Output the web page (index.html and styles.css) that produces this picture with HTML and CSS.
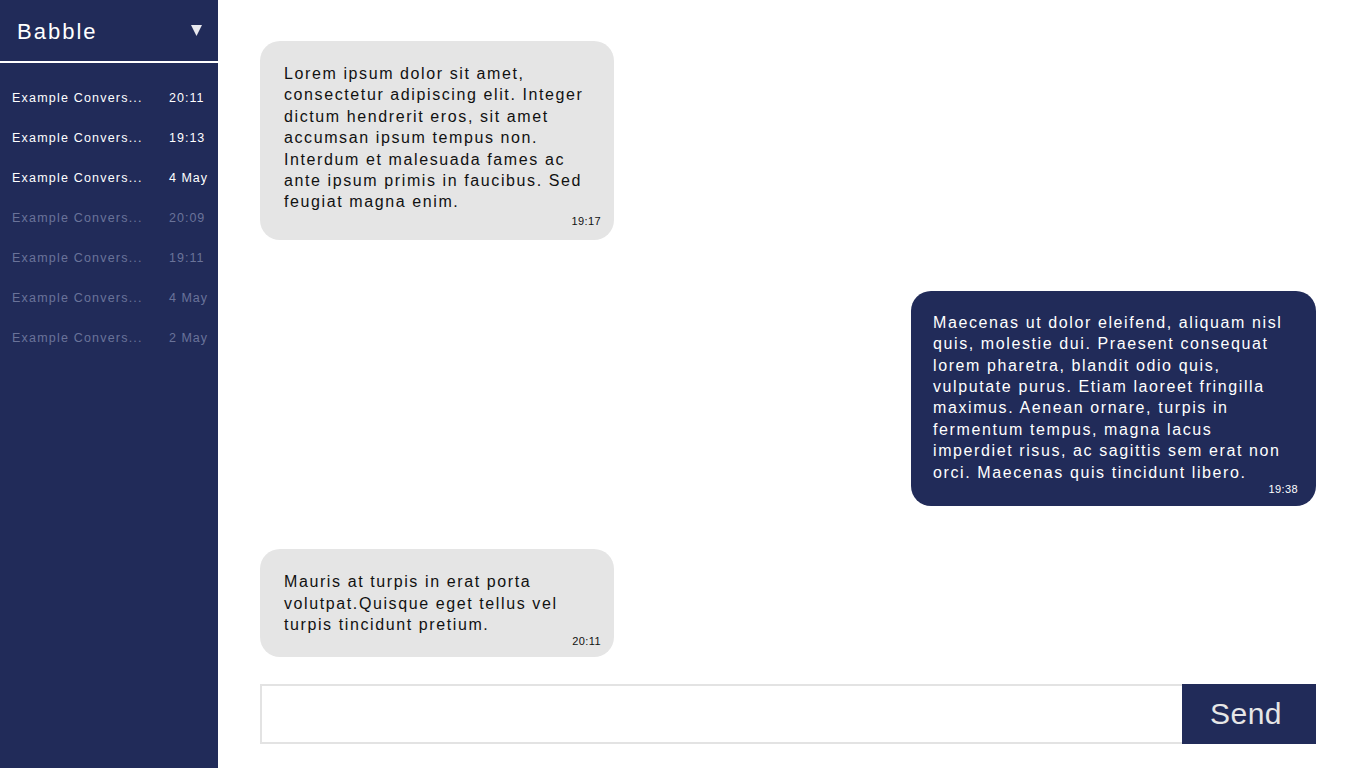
FILE: index.html
```html
<!DOCTYPE html>
<html lang="en">
<head>
<meta charset="utf-8">
<title>Babble</title>
<link rel="stylesheet" href="styles.css">
</head>
<body>
<div class="app">
  <aside class="sidebar">
    <header class="brand">
      <span class="brand-name">Babble</span>
      <svg class="caret" width="11" height="11" viewBox="0 0 11 11"><polygon points="0,0 11,0 5.5,11" fill="#e8e8ee"/></svg>
    </header>
    <ul class="convos">
      <li class="convo unread"><span class="convo-name">Example Convers...</span><span class="convo-time">20:11</span></li>
      <li class="convo unread"><span class="convo-name">Example Convers...</span><span class="convo-time">19:13</span></li>
      <li class="convo unread"><span class="convo-name">Example Convers...</span><span class="convo-time">4 May</span></li>
      <li class="convo"><span class="convo-name">Example Convers...</span><span class="convo-time">20:09</span></li>
      <li class="convo"><span class="convo-name">Example Convers...</span><span class="convo-time">19:11</span></li>
      <li class="convo"><span class="convo-name">Example Convers...</span><span class="convo-time">4 May</span></li>
      <li class="convo"><span class="convo-name">Example Convers...</span><span class="convo-time">2 May</span></li>
    </ul>
  </aside>
  <main class="chat">
    <section class="messages">
      <div class="bubble received b-first">
        <p class="bubble-text">Lorem ipsum dolor sit amet, consectetur adipiscing elit. Integer dictum hendrerit eros, sit amet accumsan ipsum tempus non. Interdum et malesuada fames ac ante ipsum primis in faucibus. Sed feugiat magna enim.</p>
        <div class="bubble-time">19:17</div>
      </div>
      <div class="bubble sent">
        <p class="bubble-text">Maecenas ut dolor eleifend, aliquam nisl quis, molestie dui. Praesent consequat lorem pharetra, blandit odio quis, vulputate purus. Etiam laoreet fringilla maximus. Aenean ornare, turpis in fermentum tempus, magna lacus imperdiet risus, ac sagittis sem erat non orci. Maecenas quis tincidunt libero.</p>
        <div class="bubble-time">19:38</div>
      </div>
      <div class="bubble received">
        <p class="bubble-text">Mauris at turpis in erat porta volutpat.Quisque eget tellus vel turpis tincidunt pretium.</p>
        <div class="bubble-time">20:11</div>
      </div>
    </section>
    <form class="composer">
      <input class="composer-input" type="text">
      <button class="composer-send" type="button">Send</button>
    </form>
  </main>
</div>
</body>
</html>
```

FILE: styles.css
```css
* { box-sizing: border-box; }
html, body { margin: 0; padding: 0; height: 100%; }
body {
  font-family: "Liberation Sans", Arial, sans-serif;
  background: #ffffff;
  letter-spacing: 0.1em;
}
.app {
  display: flex;
  height: 100vh;
}
.sidebar {
  width: 218px;
  flex: 0 0 218px;
  background: #212b59;
  color: #ffffff;
}
.brand {
  height: 63px;
  border-bottom: 2px solid #ffffff;
  display: flex;
  align-items: center;
  justify-content: space-between;
  padding: 2px 16px 0 17px;
}
.brand-name {
  font-size: 22px;
  letter-spacing: 2px;
  color: #ffffff;
}
.caret { display: block; margin-top: -2px; }
.convos {
  list-style: none;
  margin: 0;
  padding: 15px 0 0;
}
.convo {
  display: grid;
  grid-template-columns: 157px 1fr;
  height: 40px;
  align-items: center;
  padding-left: 12px;
  font-size: 12.5px;
  letter-spacing: 1.2px;
  color: #6a7399;
}
.convo.unread { color: #ffffff; }
.convo-name { white-space: nowrap; overflow: hidden; }
.convo-time { white-space: nowrap; letter-spacing: 1px; }
.chat {
  flex: 1;
  display: flex;
  flex-direction: column;
  padding: 0 50px 24px 42px;
  min-height: 0;
}
.messages {
  flex: 1 1 auto;
  min-height: 0;
  display: flex;
  flex-direction: column;
  padding-top: 41px;
}
.bubble {
  flex: 0 0 auto;
  border-radius: 20px;
  padding: 22px 13px 9px 24px;
  margin-bottom: 47px;
}
.bubble.received {
  width: 354px;
  align-self: flex-start;
  background: #e5e5e5;
  color: #111111;
}
.bubble.sent {
  width: 405px;
  align-self: flex-end;
  background: #212b59;
  color: #ffffff;
  padding: 21px 18px 10px 22px;
  margin-bottom: 43px;
}
.bubble.b-first { padding-bottom: 12px; margin-bottom: 51px; }
.bubble.b-first .bubble-time { margin-top: 2px; }
.bubble-text {
  margin: 0;
  font-size: 16px;
  line-height: 21.4px;
}
.bubble-time {
  text-align: right;
  font-size: 11px;
  line-height: 13px;
  letter-spacing: 0.4px;
}
.composer {
  flex: 0 0 60px;
  display: flex;
  height: 60px;
  margin: 0;
}
.composer-input {
  flex: 1;
  min-width: 0;
  border: 2px solid #e3e3e3;
  border-right: none;
  outline: none;
  margin: 0;
  font-family: inherit;
  font-size: 16px;
  padding: 0 14px;
}
.composer-send {
  width: 134px;
  flex: 0 0 134px;
  border: none;
  margin: 0;
  background: #212b59;
  color: #e6e6e6;
  font-family: inherit;
  font-size: 30px;
  letter-spacing: 0.5px;
  padding: 0 6px 0 0;
}
```
